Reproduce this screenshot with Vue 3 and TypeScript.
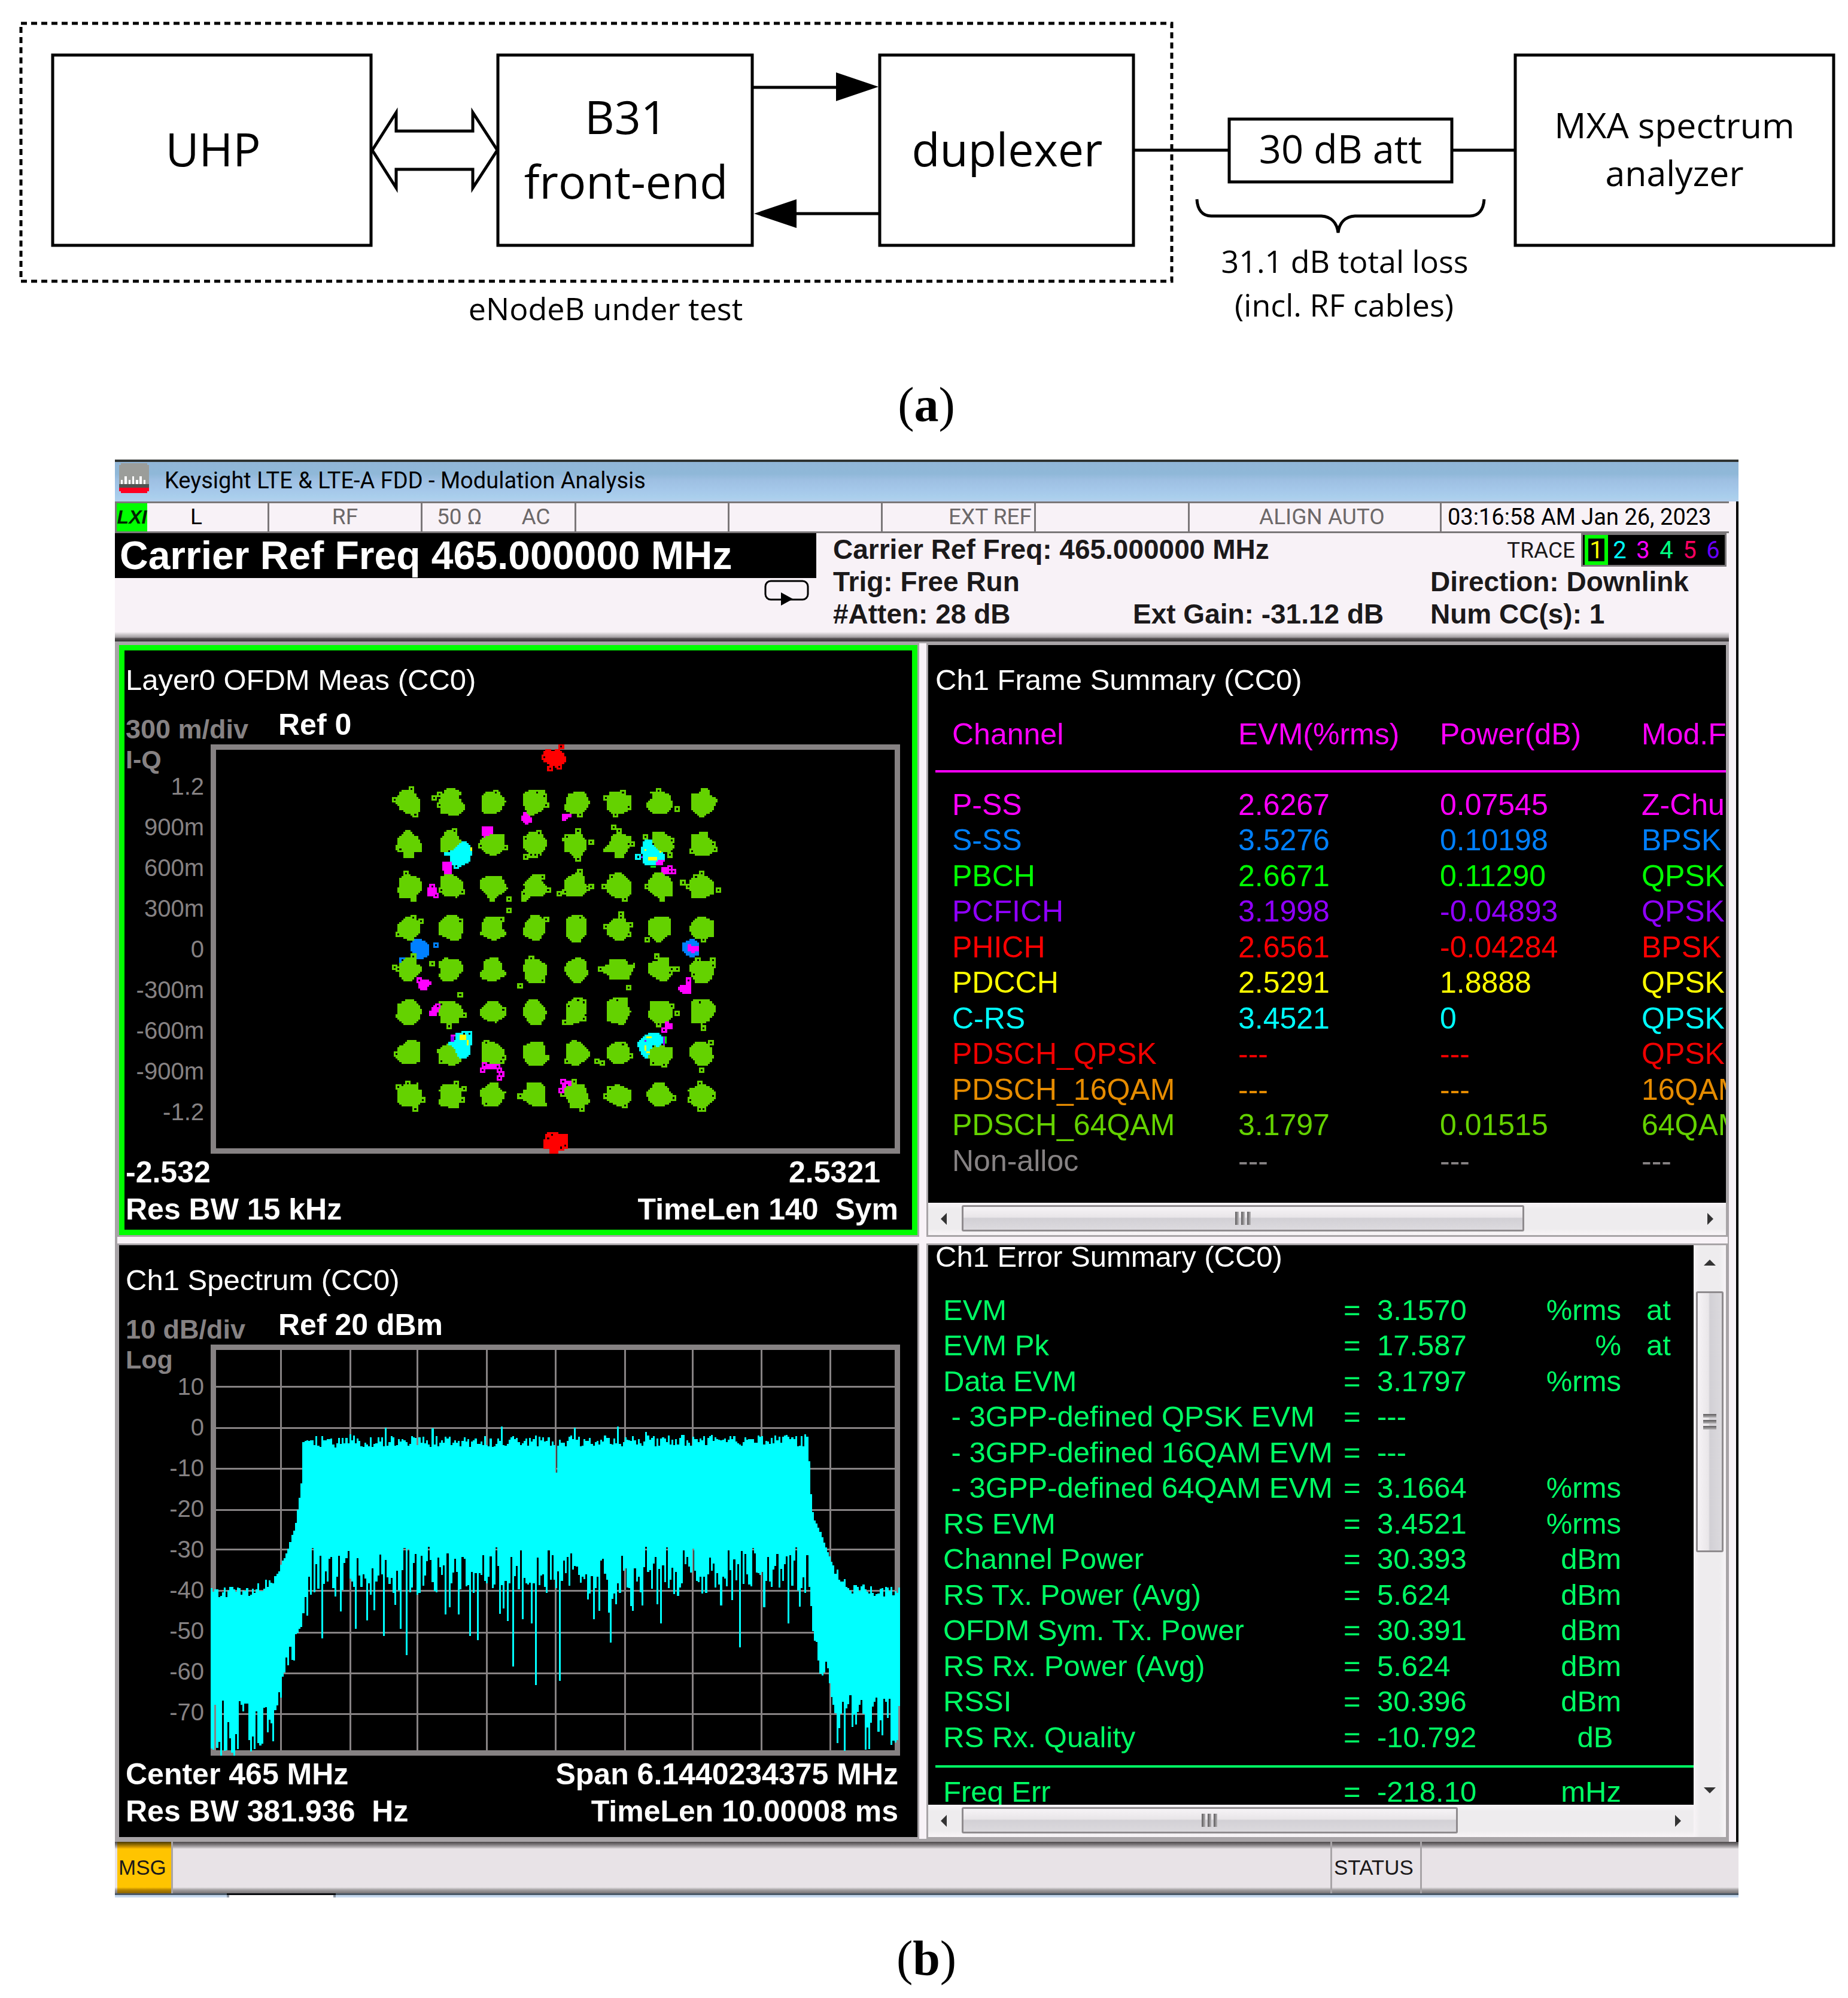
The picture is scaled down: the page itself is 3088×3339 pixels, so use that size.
<script setup lang="ts">
interface Cloud {
  color: string
  shapes: string[]
  marks: string
}

interface Patch {
  color: string
  box: [number, number, number, number]
}

/* Constellation geometry, in survey units: 1568 across by 2115 down */
const UNIT_X = 0.3827
const UNIT_Y = 0.3333
const ORIGIN_X = 288
const ORIGIN_Y = -14
const CELL_W = 8.17
const CELL_H = 9.23
const LOWER = 1035

const px = (col: number) => Math.round((6.3 + col * CELL_W) * UNIT_X + ORIGIN_X)
const py = (row: number) => Math.round((1.4 + row * CELL_H) * UNIT_Y + ORIGIN_Y)

function parse(points: string): [number, number][] {
  return points.split(' ').map((p) => p.split(',').map(Number) as [number, number])
}

function run(c0: number, c1: number, r0: number, r1: number): string {
  return `M${px(c0)} ${py(r0)}H${px(c1)}V${py(r1)}H${px(c0)}Z`
}

/* Fills a polygon cell by cell so that its edge steps like the instrument's display */
function raster(points: string, dy: number): string {
  const poly = parse(points).map(([x, y]) => [(x - 6.3) / CELL_W, (y + dy - 1.4) / CELL_H])
  const rows = poly.map((p) => p[1])
  let d = ''
  for (let r = Math.floor(Math.min(...rows)); r <= Math.ceil(Math.max(...rows)); r++) {
    const y = r + 0.5
    const hits: number[] = []
    poly.forEach((a, i) => {
      const b = poly[(i + 1) % poly.length]
      if (a[1] <= y !== b[1] <= y) hits.push(a[0] + ((y - a[1]) / (b[1] - a[1])) * (b[0] - a[0]))
    })
    hits.sort((m, n) => m - n)
    for (let i = 0; i + 1 < hits.length; i += 2) {
      const c0 = Math.round(hits[i])
      const c1 = Math.round(hits[i + 1])
      if (c1 > c0) d += run(c0, c1, r, r + 1)
    }
  }
  return d
}

function marks(list: string, dy: number, size: number): string {
  if (!list) return ''
  return parse(list)
    .map(([x, y]) => {
      const c = Math.floor((x - 6.3) / CELL_W)
      const r = Math.floor((y + dy - 1.4) / CELL_H)
      return run(c - size, c + 1 + size, r - size, r + 1 + size)
    })
    .join('')
}

const G = '#64d200'
const M = '#ff00ff'
const C = '#00ffff'
const B = '#0080ff'
const R = '#ff0000'

const upper: Cloud[] = [
  {
    color: C,
    shapes: [
      '333,510 340,530 365,530 382,545 390,575 382,630 350,645 325,668 310,665 300,630 288,620 290,600 270,597 270,585 290,580 318,550 333,540',
      '1142,520 1175,520 1175,545 1200,575 1230,590 1228,615 1185,650 1165,650 1133,640 1133,600 1125,590 1127,560',
    ],
    marks: '321,656 1113,609',
  },
  {
    color: B,
    shapes: [
      '140,1018 160,1018 185,1028 200,1048 203,1095 175,1118 148,1118 122,1078 122,1035',
      '1340,1018 1360,1018 1378,1040 1378,1095 1355,1108 1335,1105 1305,1080 1305,1038',
    ],
    marks: '231,1050 84,1125',
  },
  {
    color: M,
    shapes: [
      '612,380 628,385 651,410 651,430 635,443 620,443 604,425 605,400',
      '783,390 822,390 822,405 808,406 800,425 783,425',
      '431,455 480,455 480,495 465,500 450,510 431,498',
      '262,625 300,625 300,690 270,697 262,665',
      '204,738 226,738 235,780 240,810 195,800 197,765',
      '1185,650 1200,625 1230,615 1225,645',
      '1216,662 1245,655 1262,660 1280,675 1280,697 1216,697',
      '1330,1045 1378,1055 1378,1080 1350,1092 1330,1075',
    ],
    marks: '215,750 231,796 1252,665 1252,684 1268,684',
  },
  {
    color: G,
    shapes: [
      '80,268 105,268 137,285 160,320 160,375 135,398 105,390 72,365 56,335 62,305',
      '285,258 310,258 340,280 335,315 356,345 356,370 330,398 252,390 243,320 262,285',
      '455,278 505,278 522,300 536,325 520,365 495,388 440,388 431,365 431,305',
      '620,278 655,268 707,268 717,300 717,350 690,380 650,398 630,390 620,365 612,345 612,295',
      '808,287 855,278 880,278 890,305 904,330 890,370 868,385 830,395 808,380 791,365 800,320',
      '987,278 1040,280 1060,295 1084,296 1080,370 1050,388 1000,388 978,370 978,310',
      '1167,275 1215,278 1248,287 1262,325 1264,360 1240,388 1175,388 1150,360 1152,335 1175,310',
      '1396,258 1418,258 1435,300 1459,318 1455,340 1435,375 1402,405 1380,405 1347,370 1347,288 1372,287',
      '97,475 120,475 150,505 169,545 169,585 140,587 135,613 90,613 85,587 56,575 64,515',
      '275,475 310,475 325,490 340,520 335,545 300,575 252,585 252,520',
      '470,493 529,493 529,550 515,590 475,604 440,580 420,560 425,515',
      '637,485 690,485 716,520 712,565 690,597 640,590 612,560 612,508',
      '800,495 835,490 865,490 890,530 890,560 865,605 835,612 820,590 790,580 790,548 783,515',
      '1003,493 1050,493 1085,505 1092,545 1070,572 1045,612 1012,612 1010,587 963,585 963,565 985,540',
      '1175,485 1230,485 1262,510 1272,560 1255,585 1215,585 1185,555 1172,520',
      '1390,483 1418,483 1425,510 1440,530 1450,575 1420,603 1370,603 1345,580 1347,493',
      '95,690 130,700 160,715 169,740 165,780 145,800 145,829 122,829 115,810 72,810 65,770 75,715',
      '275,690 300,690 345,725 352,780 320,810 265,800 250,765 252,710',
      '455,699 520,703 530,740 545,760 520,790 490,815 485,829 465,829 450,795 423,762 425,725',
      '660,690 705,690 690,730 712,745 725,775 695,808 645,808 625,829 603,829 605,780 618,760 612,745 620,730',
      '850,680 875,695 880,735 905,755 885,785 860,808 800,805 790,780 790,720 815,705',
      '1020,682 1043,682 1070,725 1084,730 1084,790 1060,815 1010,810 978,785 978,735 990,705',
      '1190,682 1215,685 1245,705 1262,730 1262,800 1230,805 1228,829 1208,829 1205,810 1175,795 1158,770 1160,725',
      '1365,703 1410,700 1443,730 1443,790 1410,810 1347,810 1345,780 1330,750 1340,725',
      '100,905 140,905 160,940 160,985 140,1010 135,1025 107,1025 72,1000 64,985 64,945',
      '285,896 320,896 348,925 348,985 333,1025 300,1025 245,995 245,935',
      '447,905 525,905 520,960 536,980 535,1000 490,1024 475,1024 423,995 430,970 432,940',
      '652,896 675,896 705,925 708,985 683,1024 660,1024 612,1000 612,970 620,935',
      '827,900 870,898 888,920 888,990 860,1034 828,1034 799,1000 799,915',
      '1010,913 1050,912 1065,930 1080,945 1075,1000 1050,1025 1015,1022 980,995 978,945',
      '1167,913 1225,905 1248,905 1256,930 1256,990 1215,1034 1190,1034 1158,995 1158,930',
      '1372,905 1395,905 1443,925 1443,1005 1415,1015 1375,1018 1347,1000 1338,970 1350,930',
    ],
    marks:
      '124,262 51,319 141,393 247,290 223,309 247,347 492,280 672,280 704,300 713,347 860,393 974,309 1048,280 1072,356 1015,393 1203,271 1284,365 76,572 313,478 427,553 533,562 681,487 623,516 623,609 648,600 664,600 852,478 803,506 908,534 852,619 1007,460 1031,478 1072,544 1088,544 1260,525 1146,506 1252,600 1440,544 1448,572 1350,581 100,693 255,769 345,778 697,703 721,769 615,787 860,684 908,750 770,787 795,778 893,760 999,712 966,750 1056,815 1154,750 1390,693 1366,712 1309,731 1333,750 1464,769 549,815 549,872 133,909 165,928 68,993 337,928 517,918 713,918 860,909 1040,890 1040,909 974,956 1080,946 1072,993 1154,1021 1399,1021',
  },
  {
    color: R,
    shapes: ['709,62 732,62 740,75 765,60 783,80 797,105 797,125 775,150 750,155 720,140 700,125 700,90'],
    marks: '778,55 704,112 729,159 770,150',
  },
]

const lower: Cloud[] = [
  {
    color: G,
    shapes: [
      '97,77 145,77 145,105 169,120 169,145 145,170 120,196 95,196 72,170 70,110',
      '270,77 333,86 348,115 348,145 320,185 300,196 262,196 245,170 250,145 243,100',
      '465,77 503,77 520,110 525,140 536,150 533,170 500,185 490,196 470,196 425,178 425,150 440,140 440,95',
      '625,86 680,84 716,115 716,165 700,180 705,205 637,205 620,180 612,130 620,90',
      '840,77 862,77 888,95 895,160 865,200 840,205 799,165 791,130 800,100',
      '987,86 1060,86 1075,112 1099,105 1099,130 1085,150 1075,188 987,188 985,165 958,150 958,125 985,105',
      '1210,77 1246,77 1250,115 1280,130 1260,165 1235,195 1215,195 1170,170 1158,145 1160,100 1190,95',
      '1375,77 1400,95 1450,80 1450,115 1443,165 1418,205 1370,205 1355,180 1340,145 1340,110',
      '105,283 130,283 160,320 169,345 160,385 138,412 90,412 56,380 56,360 65,350 65,310',
      '250,292 292,292 335,305 350,345 340,375 330,403 255,403 243,350',
      '460,292 495,292 515,315 537,325 537,370 495,403 455,395 425,365 425,335 455,305',
      '637,283 665,283 705,325 716,345 705,385 690,412 648,412 612,370 612,330',
      '840,277 862,277 888,295 888,345 880,390 828,412 783,412 800,380 799,335 800,305',
      '1012,275 1068,275 1065,310 1084,345 1065,390 1050,412 1028,412 980,395 978,295',
      '1167,292 1235,292 1270,310 1262,375 1245,400 1210,410 1190,405 1160,375 1160,350 1167,320',
      '1370,283 1418,283 1450,320 1450,350 1425,395 1395,412 1347,402 1347,295',
      '113,490 138,490 160,500 160,595 135,610 85,610 52,575 52,550 75,520',
      '285,508 320,515 320,550 345,575 340,600 305,618 250,605 243,570 236,540 262,520',
      '440,490 470,497 505,510 530,545 533,600 505,612 431,600 431,500',
      '653,499 695,499 712,530 712,560 725,565 725,590 695,618 640,618 620,600 612,570 612,520',
      '825,490 845,490 880,515 904,550 900,580 850,618 800,610 791,600 800,560 795,520',
      '1012,499 1058,500 1075,530 1085,570 1065,600 1035,610 1010,608 980,580 978,530',
      '1185,517 1215,515 1262,530 1262,575 1235,625 1170,615 1160,575 1165,545',
      '1365,500 1410,500 1430,520 1443,570 1435,600 1410,620 1375,620 1340,565 1340,530',
      '65,720 152,705 152,732 169,745 169,800 140,826 82,826 65,800',
      '262,713 330,713 340,740 340,785 333,834 308,834 285,826 245,815 245,790 252,770 245,740',
      '465,705 503,705 510,735 537,750 520,800 495,826 440,826 430,790 423,745',
      '628,705 690,705 708,725 708,785 716,815 700,826 660,826 615,790 610,745 630,735',
      '825,705 878,715 895,760 904,800 865,830 816,834 808,790 790,770 795,725',
      '1010,715 1035,715 1084,745 1084,795 1050,825 1010,815 980,790 978,735',
      '1182,705 1230,705 1250,745 1275,775 1265,795 1220,826 1185,826 1152,775 1152,750 1170,735',
      '1370,713 1410,713 1450,745 1450,785 1410,825 1365,825 1332,800 1338,765 1330,735 1355,730',
    ],
    marks:
      '133,71 51,128 68,137 215,109 648,80 697,193 950,137 1194,71 1260,137 1284,137 1252,156 1374,90 1440,90 1440,118 1358,165 598,221 1072,230 337,259 255,305 354,362 288,418 525,333 852,287 877,296 811,315 877,380 795,399 1023,287 1260,315 1284,352 1203,409 1382,296 1399,428 60,559 255,597 452,502 525,578 517,597 803,597 1048,512 1080,568 933,597 958,606 1178,606 1227,615 1431,503 1390,643 109,708 68,727 174,793 141,840 321,708 354,737 345,793 452,812 598,774 836,699 868,840 786,765 991,737 974,774 1056,821 1272,784 1382,708 1440,774 1341,793 1382,840 1399,840',
  },
  {
    color: M,
    shapes: [
      '145,180 205,185 211,210 185,243 165,243 150,210',
      '230,302 250,325 235,365 203,365 205,340',
      '1321,180 1345,180 1345,262 1315,262 1288,240 1290,218 1320,212',
      '1235,396 1262,405 1262,430 1235,430',
      '431,600 510,615 515,636 431,636',
      '775,690 825,695 825,718 800,715 790,740',
    ],
    marks: '158,193 239,315 1333,193 1227,437 443,615 435,643 501,624 509,643 517,662 509,680 786,699 778,746',
  },
  {
    color: C,
    shapes: [
      '318,452 340,455 355,450 388,455 388,510 380,560 360,580 335,580 318,550 310,525 285,515 285,500 318,490',
      '1175,452 1198,452 1220,470 1222,510 1205,525 1180,517 1165,550 1158,580 1142,580 1110,525 1110,500 1142,462',
    ],
    marks: '354,455 378,455',
  },
  {
    color: R,
    shapes: [
      '725,948 765,948 770,957 807,957 807,1030 780,1035 760,1060 725,1060 725,1035 700,1030 700,1005 709,970',
    ],
    marks: '737,962 721,981 795,1018 778,1028',
  },
]

const patches: Patch[] = [
  { color: '#ffff00', box: [382, 558, 390, 576] },
  { color: '#ffff00', box: [1158, 605, 1198, 623] },
  { color: '#ffff00', box: [1142, 567, 1150, 576] },
  { color: '#ffff00', box: [1207, 576, 1215, 585] },
  { color: '#9000ff', box: [1125, 604, 1133, 613] },
  { color: '#00f000', box: [1167, 652, 1190, 661] },
  { color: '#ffff00', box: [335, 1497, 365, 1523] },
  { color: '#ffff00', box: [366, 1523, 374, 1551] },
  { color: '#9000ff', box: [294, 1506, 310, 1532] },
  { color: '#ff00ff', box: [294, 1497, 315, 1506] },
  { color: '#ffff00', box: [1150, 1506, 1174, 1515] },
  { color: '#ffff00', box: [1142, 1552, 1150, 1578] },
  { color: '#ffff00', box: [1150, 1580, 1166, 1589] },
  { color: '#9000ff', box: [1142, 1524, 1150, 1533] },
  { color: '#9000ff', box: [1223, 1506, 1231, 1551] },
  { color: '#00f000', box: [1231, 1506, 1239, 1542] },
]

const clouds = [
  ...upper.map((c) => ({ ...c, dy: 0 })),
  ...lower.map((c) => ({ ...c, dy: LOWER })),
].map((c) => ({
  color: c.color,
  body: c.shapes.map((s) => raster(s, c.dy)).join('') + marks(c.marks, c.dy, 1),
  holes: marks(c.marks, c.dy, 0),
}))

const patchRects = patches.map((p) => ({
  color: p.color,
  x: Math.round(p.box[0] * UNIT_X + ORIGIN_X),
  y: Math.round(p.box[1] * UNIT_Y + ORIGIN_Y),
  w: Math.round((p.box[2] - p.box[0]) * UNIT_X),
  h: Math.round((p.box[3] - p.box[1]) * UNIT_Y),
}))

/* Spectrum trace: the envelope is given in plot pixels (1152 x 687) */
let seed = 4659
function noise(): number {
  seed = (seed * 16807) % 2147483647
  return seed / 2147483647
}

function envelope(knots: [number, number][], x: number): number {
  for (let i = 1; i < knots.length; i++) {
    if (x <= knots[i][0]) {
      const [x0, y0] = knots[i - 1]
      const [x1, y1] = knots[i]
      return y0 + ((y1 - y0) * (x - x0)) / (x1 - x0)
    }
  }
  return knots[knots.length - 1][1]
}

const topKnots: [number, number][] = [
  [0, 416], [60, 412], [90, 404], [112, 380], [126, 345], [140, 306], [146, 262], [150, 230], [153, 162],
  [998, 160], [1000, 230], [1006, 290], [1020, 320], [1036, 364], [1052, 394], [1070, 408], [1152, 414],
]
const lowKnots: [number, number][] = [
  [0, 588], [104, 588], [112, 560], [128, 510], [140, 480], [150, 442], [162, 405], [164, 338],
  [996, 338], [1000, 420], [1008, 485], [1020, 505], [1032, 530], [1042, 580], [1152, 585],
]
const downSpikes: Record<number, number> = {
  185: 491, 242: 475, 290: 487, 317: 475, 326: 519, 393: 451, 413: 451, 433: 487, 445: 494, 504: 538,
  521: 459, 536: 466, 542: 569, 583: 562, 639: 459, 669: 498, 705: 445, 876: 472, 883: 506, 966: 466, 973: 475,
}
const upSpikes: Record<number, number> = { 292: 139, 370: 140, 486: 137, 607: 139, 680: 137, 726: 146, 233: 150 }

function near(table: Record<number, number>, x: number): number | undefined {
  const key = Object.keys(table).find((k) => Math.abs(Number(k) - x - 1) < 2)
  return key === undefined ? undefined : table[Number(key)]
}

function spectrum(): string {
  let d = ''
  const columns = 368
  for (let i = 0; i < columns; i++) {
    const x0 = Math.round((i * 1152) / columns)
    const x1 = Math.round(((i + 1) * 1152) / columns)
    const flat = x0 >= 164 && x0 <= 996
    const skirt = x0 < 104 || x0 > 1040
    let top = envelope(topKnots, x0) + (noise() - 0.5) * (flat || skirt ? 20 : 4)
    let low = envelope(lowKnots, x0)
    if (flat) {
      low += noise() * 80
      if (noise() > 0.7) low += noise() * 55
    } else if (skirt) {
      low += noise() * 104
    } else {
      low += noise() * 50
    }
    top = near(upSpikes, x0) ?? top
    low = near(downSpikes, x0) ?? low
    if (Math.abs(x0 - 575) < 2) top = 214
    d += `M${x0} ${Math.round(top)}H${x1}V${Math.round(Math.min(low, 687))}H${x0}Z`
  }
  return d
}
const trace = spectrum()
const gridX = [117, 233, 345, 461, 576, 692, 805, 920, 1035]
const gridY = [70, 139, 207, 276, 342, 411, 481, 549, 617]

const iqTicks = ['1.2', '900m', '600m', '300m', '0', '-300m', '-600m', '-900m', '-1.2']
const dbTicks = ['10', '0', '-10', '-20', '-30', '-40', '-50', '-60', '-70']

const traces = [
  { n: 1, color: '#ffff00' },
  { n: 2, color: '#00ffff' },
  { n: 3, color: '#ff00ff' },
  { n: 4, color: '#00ff80' },
  { n: 5, color: '#ff0060' },
  { n: 6, color: '#6a00ff' },
]

const channels = [
  { name: 'P-SS', evm: '2.6267', power: '0.07545', mod: 'Z-Chu', color: '#ff00ff' },
  { name: 'S-SS', evm: '3.5276', power: '0.10198', mod: 'BPSK', color: '#0080ff' },
  { name: 'PBCH', evm: '2.6671', power: '0.11290', mod: 'QPSK', color: '#00ff00' },
  { name: 'PCFICH', evm: '3.1998', power: '-0.04893', mod: 'QPSK', color: '#9000ff' },
  { name: 'PHICH', evm: '2.6561', power: '-0.04284', mod: 'BPSK', color: '#ff0000' },
  { name: 'PDCCH', evm: '2.5291', power: '1.8888', mod: 'QPSK', color: '#ffff00' },
  { name: 'C-RS', evm: '3.4521', power: '0', mod: 'QPSK', color: '#00ffff' },
  { name: 'PDSCH_QPSK', evm: '---', power: '---', mod: 'QPSK', color: '#f00000' },
  { name: 'PDSCH_16QAM', evm: '---', power: '---', mod: '16QAM', color: '#e68c00' },
  { name: 'PDSCH_64QAM', evm: '3.1797', power: '0.01515', mod: '64QAM', color: '#64d200' },
  { name: 'Non-alloc', evm: '---', power: '---', mod: '---', color: '#868283' },
]

const errors = [
  { name: 'EVM', value: '3.1570', unit: '%rms', at: 'at' },
  { name: 'EVM Pk', value: '17.587', unit: '%', at: 'at' },
  { name: 'Data EVM', value: '3.1797', unit: '%rms', at: '' },
  { name: ' - 3GPP-defined QPSK EVM', value: '---', unit: '', at: '' },
  { name: ' - 3GPP-defined 16QAM EVM', value: '---', unit: '', at: '' },
  { name: ' - 3GPP-defined 64QAM EVM', value: '3.1664', unit: '%rms', at: '' },
  { name: 'RS EVM', value: '3.4521', unit: '%rms', at: '' },
  { name: 'Channel Power', value: '30.393', unit: 'dBm', at: '' },
  { name: 'RS Tx. Power (Avg)', value: '5.624', unit: 'dBm', at: '' },
  { name: 'OFDM Sym. Tx. Power', value: '30.391', unit: 'dBm', at: '' },
  { name: 'RS Rx. Power (Avg)', value: '5.624', unit: 'dBm', at: '' },
  { name: 'RSSI', value: '30.396', unit: 'dBm', at: '' },
  { name: 'RS Rx. Quality', value: '-10.792', unit: 'dB ', at: '' },
]
</script>

<template>
  <main class="page">
    <figure class="setup">
      <svg class="diagram" viewBox="0 0 3088 600" role="img" aria-label="Test setup">
        <g fill="none" stroke="#000" stroke-width="5">
          <path d="M35 39H1958V470H35Z" stroke-dasharray="10 7" />
          <path d="M88 92H620V410H88Z" />
          <path d="M832 92H1257V410H832Z" />
          <path d="M1470 92H1894V410H1470Z" />
          <path d="M2054 199H2426V304H2054Z" />
          <path d="M2532 92H3064V410H2532Z" />
          <path d="M1258 146H1400M1328 357H1470M1895 251H2054M2427 251H2532" />
          <path d="M622 251L662 188V219H790V188L831 251L790 314V283H662V314Z" />
          <path d="M2000 333C2001 350 2009 361 2024 361H2208C2224 362 2234 372 2236 389C2238 372 2248 362 2264 361H2456C2471 361 2479 350 2480 333" />
        </g>
        <path d="M1397 121L1468 145L1397 169ZM1331 333L1260 357L1331 381Z" />
        <g class="node" text-anchor="middle">
          <text x="356" y="278">UHP</text>
          <text x="1046" y="224">B31</text>
          <text x="1046" y="332">front-end</text>
          <text x="1683" y="278">duplexer</text>
          <text class="mid" x="2240" y="273">30 dB att</text>
          <text class="small" x="2798" y="231">MXA spectrum</text>
          <text class="small" x="2798" y="311">analyzer</text>
          <text class="note" x="2247" y="456">31.1 dB total loss</text>
          <text class="note" x="2246" y="529">(incl. RF cables)</text>
          <text class="note" x="1012" y="535">eNodeB under test</text>
        </g>
      </svg>
      <figcaption>(<b>a</b>)</figcaption>
    </figure>

    <figure class="shot">
      <div class="app">
        <header class="titlebar">
          <svg class="appicon" viewBox="0 0 50 50" aria-hidden="true">
            <path fill="#9b9d9a" d="M3 0H47V3H50V36H0V3H3Z" />
            <path fill="#505452" d="M0 35H50V42H0Z" />
            <path fill="#ff0020" d="M0 41H50V47H47V50H3V47H0Z" />
            <path fill="#fff" d="M3 28h3v7h-3zM9 22h4v13h-4zM16 28h3v7h-3zM22 22h3v13h-3zM28 28h4v7h-4zM34 22h4v13h-4zM41 28h3v7h-3z" />
          </svg>
          <span>Keysight LTE &amp; LTE-A FDD - Modulation Analysis</span>
        </header>

        <div class="body">
          <div class="strip">
            <div class="cell c-l"><b class="lxi">LXI</b><span>L</span></div>
            <div class="cell c-rf">RF</div>
            <div class="cell c-ohm"><span>50 Ω</span><span>AC</span></div>
            <div class="cell"></div>
            <div class="cell"></div>
            <div class="cell c-ext">EXT REF</div>
            <div class="cell"></div>
            <div class="cell c-align">ALIGN AUTO</div>
            <div class="cell c-date">03:16:58 AM Jan 26, 2023</div>
          </div>

          <section class="meas">
            <div class="active">
              <h1>Carrier Ref Freq 465.000000 MHz</h1>
              <svg class="loop" viewBox="0 0 75 43" aria-hidden="true">
                <rect x="2" y="2" width="71" height="31" rx="9" fill="none" stroke="#000" stroke-width="3" />
                <path d="M28 21L48 32L28 43Z" />
              </svg>
            </div>
            <div class="info">
              <span class="wide">Carrier Ref Freq: 465.000000 MHz</span>
              <span class="tracebox">
                TRACE
                <span class="nums">
                  <i v-for="t in traces" :key="t.n" :class="{ on: t.n === 1 }" :style="{ color: t.color }">{{ t.n }}</i>
                </span>
              </span>
              <span class="wide">Trig: Free Run</span>
              <span>Direction: Downlink</span>
              <span>#Atten: 28 dB</span>
              <span>Ext Gain: -31.12 dB</span>
              <span>Num CC(s): 1</span>
            </div>
          </section>

          <div class="panels">
            <section class="panel plot selected">
              <h2>Layer0 OFDM Meas (CC0)</h2>
              <div class="scale"><span>300 m/div</span><b>Ref 0</b></div>
              <div class="chart">
                <div class="axis">
                  <b>I-Q</b>
                  <span v-for="t in iqTicks" :key="t">{{ t }}</span>
                </div>
                <svg class="iq" viewBox="0 0 1152 684" preserveAspectRatio="none" shape-rendering="crispEdges">
                  <rect x="4" y="4" width="1143" height="675" fill="none" stroke="#868283" stroke-width="9" />
                  <template v-for="(c, i) in clouds" :key="i">
                    <path :d="c.body" :fill="c.color" />
                    <path :d="c.holes" fill="#000" />
                  </template>
                  <rect v-for="(p, i) in patchRects" :key="'p' + i" :x="p.x" :y="p.y" :width="p.w" :height="p.h" :fill="p.color" />
                </svg>
              </div>
              <div class="foot"><span>-2.532</span><span class="inset">2.5321</span></div>
              <div class="foot"><span>Res BW 15 kHz</span><span>TimeLen 140&nbsp; Sym</span></div>
            </section>

            <section class="panel">
              <div class="view frame">
                <h2>Ch1 Frame Summary (CC0)</h2>
                <table>
                  <thead>
                    <tr><th>Channel</th><th>EVM(%rms)</th><th>Power(dB)</th><th>Mod.F</th></tr>
                  </thead>
                  <tbody>
                    <tr v-for="c in channels" :key="c.name" :style="{ color: c.color }">
                      <td>{{ c.name }}</td><td>{{ c.evm }}</td><td>{{ c.power }}</td><td>{{ c.mod }}</td>
                    </tr>
                  </tbody>
                </table>
              </div>
              <div class="hbar">
                <button type="button" aria-label="Scroll left"><svg viewBox="0 0 14 24"><path d="M12 2V22L2 12Z" /></svg></button>
                <div class="track"><div class="thumb t77"><i></i><i></i><i></i></div></div>
                <button type="button" aria-label="Scroll right"><svg viewBox="0 0 14 24"><path d="M2 2V22L12 12Z" /></svg></button>
              </div>
            </section>

            <section class="panel plot">
              <h2>Ch1 Spectrum (CC0)</h2>
              <div class="scale"><span>10 dB/div</span><b>Ref 20 dBm</b></div>
              <div class="chart">
                <div class="axis">
                  <b>Log</b>
                  <span v-for="t in dbTicks" :key="t">{{ t }}</span>
                </div>
                <svg class="spec" viewBox="0 0 1152 687" preserveAspectRatio="none" shape-rendering="crispEdges">
                  <path v-for="x in gridX" :key="'x' + x" :d="`M${x} 8V680`" stroke="#868283" stroke-width="3" />
                  <path v-for="y in gridY" :key="'y' + y" :d="`M8 ${y}H1144`" stroke="#868283" stroke-width="3" />
                  <rect x="4" y="4" width="1143" height="678" fill="none" stroke="#868283" stroke-width="9" />
                  <path :d="trace" fill="#00ffff" />
                </svg>
              </div>
              <div class="foot"><span>Center 465 MHz</span><span>Span 6.1440234375 MHz</span></div>
              <div class="foot"><span>Res BW 381.936&nbsp; Hz</span><span>TimeLen 10.00008 ms</span></div>
            </section>

            <section class="panel split">
              <div class="left">
                <div class="view error">
                  <h2>Ch1 Error Summary (CC0)</h2>
                  <table>
                    <tbody>
                      <tr v-for="e in errors" :key="e.name">
                        <td>{{ e.name }}</td><td>=</td><td>{{ e.value }}</td><td>{{ e.unit }}</td><td>{{ e.at }}</td>
                      </tr>
                    </tbody>
                    <tbody class="freq">
                      <tr><td>Freq Err</td><td>=</td><td>-218.10</td><td>mHz</td><td></td></tr>
                    </tbody>
                  </table>
                </div>
                <div class="hbar">
                  <button type="button" aria-label="Scroll left"><svg viewBox="0 0 14 24"><path d="M12 2V22L2 12Z" /></svg></button>
                  <div class="track"><div class="thumb t71"><i></i><i></i><i></i></div></div>
                  <button type="button" aria-label="Scroll right"><svg viewBox="0 0 14 24"><path d="M2 2V22L12 12Z" /></svg></button>
                </div>
              </div>
              <div class="vbar">
                <button type="button" aria-label="Scroll up"><svg viewBox="0 0 24 14"><path d="M2 12H22L12 2Z" /></svg></button>
                <div class="track"><div class="thumb"><i></i><i></i><i></i></div></div>
                <button type="button" aria-label="Scroll down"><svg viewBox="0 0 24 14"><path d="M2 2H22L12 12Z" /></svg></button>
              </div>
            </section>
          </div>
        </div>

        <footer class="status">
          <span class="msg">MSG</span>
          <span class="text"></span>
          <span class="label">STATUS</span>
          <span class="rest"></span>
        </footer>
        <div class="edge"><i></i></div>
      </div>
      <figcaption>(<b>b</b>)</figcaption>
    </figure>
  </main>
</template>

<style>
body {
  margin: 0;
  background: #fff;
}
</style>

<style scoped>
.page {
  font-family: "Liberation Sans", Arial, sans-serif;
  color: #000;
}
figure {
  margin: 0;
}
figcaption {
  font: 82px/120px "Liberation Serif", "Times New Roman", serif;
  text-align: center;
  padding-left: 8px;
}
.setup figcaption {
  padding-top: 17px;
  padding-bottom: 31px;
}
.shot figcaption {
  padding-top: 42px;
}
.diagram {
  display: block;
  width: 100%;
  height: auto;
}
.node {
  font-family: "Open Sans", "Noto Sans", sans-serif;
  font-size: 77px;
}
.node .mid {
  font-size: 65px;
}
.node .small {
  font-size: 59px;
}
.node .note {
  font-size: 52px;
}

.app {
  margin: 0 183px 0 192px;
}
.titlebar {
  box-sizing: border-box;
  display: flex;
  align-items: center;
  gap: 26px;
  height: 70px;
  padding: 0 0 4px 7px;
  border-top: 4px solid #2e3230;
  background: linear-gradient(#91b5d6, #8fb8d8 30%, #9dbfe2 45%, #a5c8ea 72%, #aacfec 90%, #b4cfee);
  font: 38px/58px Roboto, sans-serif;
}
.appicon {
  width: 50px;
  height: 50px;
  margin-top: -8px;
}
.body {
  background: #f8f2f7;
  padding-right: 12px;
  border-right: 4px solid #000;
}
.strip {
  display: grid;
  grid-template-columns: 258fr 256fr 257fr 256fr 256fr 256fr 257fr 421fr 480fr;
  height: 47px;
  border: solid #7b7779;
  border-width: 3px 0;
  font: 37px/46px Roboto, sans-serif;
  color: #6c6869;
  white-space: nowrap;
}
.cell {
  box-sizing: border-box;
  min-width: 0;
  border-right: 3px solid #7b7779;
}
.c-l {
  display: flex;
  color: #000;
  border-left: 3px solid #7b7779;
}
.c-l span {
  padding-left: 72px;
}
.lxi {
  width: 51px;
  background: #00ff00;
  color: #002000;
  font: italic bold 32px/46px "Liberation Sans", sans-serif;
  text-align: center;
}
.c-rf {
  text-align: center;
}
.c-ohm {
  display: flex;
  gap: 66px;
  padding-left: 24px;
}
.c-ext {
  text-align: right;
  padding-right: 4px;
}
.c-align {
  padding-left: 116px;
}
.c-date {
  padding-left: 10px;
  border-right: 0;
  font-size: 38px;
  color: #000;
}
.strip .c-ext {
  grid-column: auto;
}

.meas {
  display: flex;
  height: 181px;
  background: linear-gradient(transparent 165px, #cfcbce 169px, #a29ea1 174px, #565254 176px, #333031 181px);
}
.active {
  width: 1172px;
}
.active h1 {
  margin: 0;
  padding-left: 8px;
  background: #000;
  color: #fff;
  font-size: 66px;
  line-height: 75px;
  white-space: nowrap;
}
.loop {
  display: block;
  width: 75px;
  height: 43px;
  margin: 3px 12px 0 auto;
}
.info {
  flex: 1;
  display: grid;
  grid-template-columns: 501px 497px 1fr;
  grid-auto-rows: 54px;
  padding-left: 28px;
  font-weight: bold;
  font-size: 46px;
  line-height: 54px;
  color: #1b191a;
  white-space: nowrap;
}
.wide {
  grid-column: span 2;
}
.tracebox {
  display: flex;
  justify-content: flex-end;
  gap: 10px;
  font: 37px/58px Roboto, sans-serif;
  padding-right: 4px;
}
.nums {
  display: flex;
  height: 50px;
  padding: 0 0 0 3px;
  border: 3px solid #7b7779;
  background: #000;
  margin-bottom: -4px;
}
.nums i {
  width: 39px;
  box-sizing: border-box;
  font-style: normal;
  font-size: 40px;
  line-height: 52px;
  text-align: center;
}
.nums .on {
  border: 6px solid #00ff00;
  line-height: 40px;
}

.panels {
  display: grid;
  grid-template-columns: minmax(0, 1340fr) minmax(0, 1339fr);
  gap: 11px 12px;
  border: solid #a8a4a7;
  border-width: 3px 2px 5px 4px;
}
.panel {
  border: 3px solid #a8a4a7;
  background: #000;
  color: #fff;
  min-width: 0;
}
h2 {
  margin: 0;
  font-weight: normal;
  font-size: 49px;
  line-height: 60px;
  white-space: nowrap;
}
.plot {
  padding: 28px 29px 12px 11px;
}
.selected {
  box-shadow: inset 0 0 0 9px #00ff00;
}
.scale {
  display: flex;
  height: 60px;
  padding: 15px 0 3px;
  font-weight: bold;
  font-size: 50px;
  line-height: 60px;
  white-space: nowrap;
}
.scale span {
  width: 255px;
  padding-top: 8px;
  font-size: 45px;
  color: #868283;
}
.chart {
  display: flex;
}
.axis {
  width: 131px;
  padding-right: 11px;
  display: flex;
  flex-direction: column;
  color: #868283;
  font-size: 40px;
  line-height: 68px;
  text-align: right;
}
.axis b {
  height: 36px;
  font-size: 43px;
  line-height: 50px;
  text-align: left;
}
.chart svg {
  flex: 1;
  min-width: 0;
}
.iq {
  height: 684px;
}
.spec {
  height: 687px;
}
.foot {
  display: flex;
  justify-content: space-between;
  margin-right: 3px;
  font-weight: bold;
  font-size: 50px;
  line-height: 62px;
  white-space: nowrap;
}
.inset {
  margin-right: 30px;
}

.view {
  overflow: hidden;
  padding-left: 12px;
}
table {
  width: 100%;
  table-layout: fixed;
  border-spacing: 0;
  font-size: 49px;
  line-height: 59px;
  white-space: pre;
}
td,
th {
  padding: 0;
  height: 59px;
  font-weight: normal;
  text-align: left;
  vertical-align: top;
}
tr:nth-child(even) td {
  height: 60px;
}
.frame {
  height: 904px;
  padding-top: 28px;
}
.frame table {
  margin-top: 32px;
  font-size: 50px;
}
.frame th {
  width: 337px;
  padding-bottom: 30px;
  border-bottom: 4px solid #ff00ff;
  color: #ff00ff;
}
.frame th:first-child {
  width: 478px;
}
.frame th:first-child,
.frame td:first-child {
  padding-left: 28px;
}
.frame th:last-child {
  width: auto;
}
.frame tbody::before {
  content: "";
  display: block;
  height: 25px;
}

.split {
  display: flex;
}
.left {
  flex: 1;
  min-width: 0;
}
.error {
  height: 935px;
}
.error h2 {
  margin-top: -11px;
}
.error table {
  margin-top: 30px;
  color: #00ff64;
}
.error td:nth-child(1) {
  width: 669px;
  padding-left: 13px;
}
.error td:nth-child(2) {
  width: 56px;
}
.error td:nth-child(3) {
  width: 240px;
}
.error td:nth-child(4) {
  width: 168px;
  text-align: right;
}
.error td:nth-child(5) {
  padding-left: 42px;
}
.error tr:last-child td {
  height: 76px;
}
.error .freq tr td {
  border-top: 4px solid #00ff64;
  padding-top: 11px;
}

button {
  display: flex;
  align-items: center;
  justify-content: center;
  border: 0;
  padding: 0;
  background: none;
}
.hbar {
  display: flex;
  height: 54px;
  background: linear-gradient(#f8f4f7, #eeecee 20%, #eeecee 80%, #f8f4f7);
}
.hbar button {
  width: 52px;
}
.hbar svg {
  width: 14px;
  height: 24px;
  fill: #333;
}
.track {
  flex: 1;
}
.hbar .track {
  padding: 4px 4px 6px;
}
.thumb {
  box-sizing: border-box;
  height: 100%;
  display: flex;
  align-items: center;
  justify-content: center;
  gap: 4px;
  border: 3px solid #8f8b8e;
  border-radius: 3px;
  background: linear-gradient(#f6f3f6, #e9e6e9 45%, #d2d0d5 50%, #dcdade);
}
.thumb i {
  width: 6px;
  height: 22px;
  background: linear-gradient(90deg, #5c5a5c, #b8b6b8);
}
.t77 {
  width: 77%;
}
.t71 {
  width: 71%;
}
.vbar {
  display: flex;
  flex-direction: column;
  width: 54px;
  background: linear-gradient(90deg, #f8f4f7, #eeecee 20%, #eeecee 80%, #f8f4f7);
}
.vbar button {
  height: 58px;
}
.vbar button:last-child {
  margin-bottom: 54px;
  height: 48px;
}
.vbar svg {
  width: 24px;
  height: 14px;
  fill: #333;
}
.vbar .track {
  padding: 19px 4px 0;
}
.vbar .thumb {
  height: 436px;
  flex-direction: column;
  background: linear-gradient(90deg, #f6f3f6, #e9e6e9 45%, #d2d0d5 50%, #dcdade);
}
.vbar .thumb i {
  width: 22px;
  height: 6px;
  background: linear-gradient(#5c5a5c, #b8b6b8);
}

.status {
  display: flex;
  height: 86px;
  padding-left: 4px;
  background: linear-gradient(#4c484a, #7f7b7e 5px, #b5b1b4 9px, #e8e3e7 12px, #e8e3e7 76px, #a6a3a5 80px, #777476);
  font-size: 35px;
  line-height: 86px;
  color: #1b191a;
}
.msg {
  width: 93px;
  padding-left: 2px;
  box-sizing: border-box;
  border-right: 3px solid #a8a4a7;
  background: linear-gradient(#4d3c00, #946f00 5px, #d79b00 9px, #ffc400 12px, #ffc400 76px, #b98600 80px, #8a6400);
}
.text {
  flex: 1;
}
.label {
  box-sizing: border-box;
  width: 153px;
  padding-left: 3px;
  border: solid #a8a4a7;
  border-width: 0 3px;
}
.rest {
  width: 529px;
}
.edge {
  height: 4px;
  border-top: 3px solid #4a5867;
  background: #c5d8ee;
}
.edge i {
  display: block;
  width: 174px;
  height: 4px;
  margin-left: 187px;
  border: solid #8d98a6;
  border-width: 0 4px;
  background: #fff;
  box-shadow: 0 -3px #0a0d10;
}
</style>
